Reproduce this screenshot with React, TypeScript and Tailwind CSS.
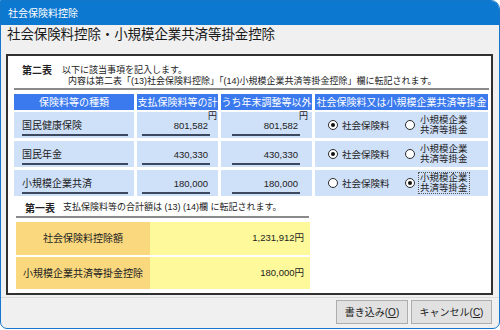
import React from "react";

const F = { fontFamily: '"Liberation Sans", "Noto Sans CJK JP", sans-serif' };

function Radio({ checked }: { checked: boolean }) {
  return (
    <span className="flex h-[10px] w-[10px] shrink-0 items-center justify-center rounded-full border border-[#2a2a2a] bg-white">
      {checked && <span className="h-[4px] w-[4px] rounded-full bg-[#111]" />}
    </span>
  );
}

const rows = [
  { name: "国民健康保険", a: "801,582", b: "801,582", sel: 0, yen: true },
  { name: "国民年金", a: "430,330", b: "430,330", sel: 0, yen: false },
  { name: "小規模企業共済", a: "180,000", b: "180,000", sel: 1, yen: false },
];

export default function App() {
  return (
    <div className="h-[330px] w-[500px] bg-white text-[#222]" style={F}>
      <div className="flex h-[329px] w-[500px] flex-col overflow-hidden rounded-tr-[9px] rounded-b-[7px] border border-[#1577cc] bg-[#f0f0f0]">
        <div className="flex h-[24px] shrink-0 items-center bg-[#0c78d0] pl-[7px] text-[10px] text-white">
          社会保険料控除
        </div>
        <div className="flex h-[19px] items-center pl-[6px] text-[13.5px] leading-[18px] tracking-[-0.1px] text-[#1a1a1a]">
          社会保険料控除・小規模企業共済等掛金控除
        </div>
        <div className="ml-[5px] mr-[6px] mt-[10px] h-[241px] border-2 border-[#303030] bg-white">
          <div className="pt-[9px] text-[9px] leading-[11px]">
            <div className="flex pl-[14px]">
              <span className="w-[40px] text-[10px] font-bold">第二表</span>
              <span>以下に該当事項を記入します。</span>
            </div>
            <div className="pl-[60px]">内容は第二表「(13)社会保険料控除」「(14)小規模企業共済等掛金控除」欄に転記されます。</div>
          </div>
          <div className="pl-[6px] pr-[2px]">
            <div className="mt-[1px] h-[2px] bg-[#8a8a8a]" />
            <div className="mt-[4px] grid grid-cols-[120px_81px_91px_173px] gap-x-[3px] gap-y-[3px]">
              <div className="flex h-[16px] items-center justify-center bg-[#3a79ee] text-[10px] text-white">保険料等の種類</div>
              <div className="flex h-[16px] items-center justify-center bg-[#3a79ee] text-[10px] text-white">支払保険料等の計</div>
              <div className="flex h-[16px] items-center justify-center bg-[#3a79ee] text-[10px] text-white">うち年末調整等以外</div>
              <div className="flex h-[16px] items-center justify-center bg-[#3a79ee] text-[10px] text-white">社会保険料又は小規模企業共済等掛金</div>
              {rows.map((r, i) => (
                <React.Fragment key={i}>
                  <div className={`flex h-[26px] items-end bg-[#cfe0f9] pb-[2px] pl-[8px] pr-[6px] ${i === 0 ? "mt-[-1px]" : ""}`}>
                    <div className="h-[17px] w-full border-b-2 border-[#3c4760] text-[10px] leading-[14px]">{r.name}</div>
                  </div>
                  <div className={`relative flex h-[26px] items-end bg-[#cfe0f9] pb-[2px] pl-[5px] pr-[8px] ${i === 0 ? "mt-[-1px]" : ""}`}>
                    <div className="h-[17px] w-full border-b-2 border-[#3c4760] pr-[2px] text-right text-[9.5px] leading-[14px]">{r.a}</div>
                    {r.yen && <span className="absolute right-[1px] top-[-1px] text-[9px] leading-[10px]">円</span>}
                  </div>
                  <div className={`relative flex h-[26px] items-end bg-[#cfe0f9] pb-[2px] pl-[11px] pr-[12px] ${i === 0 ? "mt-[-1px]" : ""}`}>
                    <div className="h-[17px] w-full border-b-2 border-[#3c4760] pr-[2px] text-right text-[9.5px] leading-[14px]">{r.b}</div>
                    {r.yen && <span className="absolute right-[4px] top-[-1px] text-[9px] leading-[10px]">円</span>}
                  </div>
                  <div className={`flex h-[26px] items-center bg-[#cfe0f9] pl-[13px] ${i === 0 ? "mt-[-1px]" : ""}`}>
                    <div className="flex w-[77px] items-center gap-[4px]">
                      <Radio checked={r.sel === 0} />
                      <span className="text-[9.5px] leading-[11px]">社会保険料</span>
                    </div>
                    <div className="flex items-center gap-[3px]">
                      <Radio checked={r.sel === 1} />
                      <span className={`border px-[1px] text-[9.5px] leading-[10px] ${r.sel === 1 ? "border-dotted border-[#555]" : "border-transparent"}`}>
                        小規模企業
                        <br />
                        共済等掛金
                      </span>
                    </div>
                  </div>
                </React.Fragment>
              ))}
            </div>
            <div className="mt-[5px] flex h-[14px] items-center pl-[11px] text-[9px]">
              <span className="w-[38px] text-[10px] font-bold">第一表</span>
              <span>支払保険料等の合計額は (13) (14)欄 に転記されます。</span>
            </div>
            <div className="ml-[2px] mt-[1px] h-[2px] w-[293px] bg-[#8a8a8a]" />
            <div className="ml-[2px] mt-[4px] flex w-[294px] flex-col gap-[2px]">
              <div className="flex h-[33px]">
                <div className="flex w-[134px] items-center justify-center bg-[#fad87e] text-[10px]">社会保険料控除額</div>
                <div className="flex flex-1 items-center justify-end bg-[#fefa9b] pr-[6px] text-[9.5px]">1,231,912円</div>
              </div>
              <div className="flex h-[32px]">
                <div className="flex w-[134px] items-center justify-center bg-[#fad87e] text-[10px]">小規模企業共済等掛金控除</div>
                <div className="flex flex-1 items-center justify-end bg-[#fefa9b] pr-[6px] text-[9.5px]">180,000円</div>
              </div>
            </div>
          </div>
        </div>
        <div className="mt-[2px] h-[1px] bg-[#dadada]" />
        <div className="mt-[2px] flex justify-end gap-[3px] pr-[7px]">
          <button className="flex h-[24px] w-[72px] items-center justify-center border border-[#adadad] bg-[#e1e1e1] text-[10px]">
            書き込み(<span className="underline">O</span>)
          </button>
          <button className="flex h-[24px] w-[81px] items-center justify-center border border-[#adadad] bg-[#e1e1e1] text-[10px]">
            キャンセル(<span className="underline">C</span>)
          </button>
        </div>
      </div>
    </div>
  );
}
